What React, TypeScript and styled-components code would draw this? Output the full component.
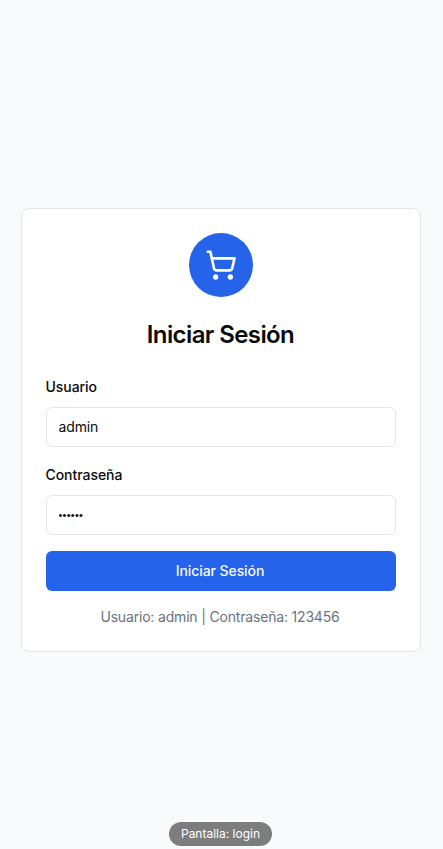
import React, { useState } from "react";
import styled, { createGlobalStyle } from "styled-components";
import { ShoppingCart } from "lucide-react";

const GlobalStyle = createGlobalStyle`
  *, *::before, *::after { box-sizing: border-box; }
  body { margin: 0; background: #f9fafb; font-family: Inter, sans-serif; color: #0a0a0a; }
`;

const Page = styled.main`
  height: 100vh;
  display: grid;
  grid-template-columns: 400px;
  justify-content: center;
  align-content: start;
  padding: 208px 1px 0 0;
  overflow: hidden;
`;

const Card = styled.form`
  height: 444px;
  border: 1px solid #e5e5e5;
  border-radius: 8px;
  background: #fff;
  padding: 24px;
  display: flex;
  flex-direction: column;
`;

const Logo = styled.div`
  width: 64px;
  height: 64px;
  flex: none;
  align-self: center;
  display: grid;
  place-items: center;
  border-radius: 50%;
  background: #2563eb;
  color: #fff;
`;

const Title = styled.h1`
  margin: 22px 0 26px;
  padding-right: 1px;
  text-align: center;
  font-size: 24px;
  line-height: 32px;
  font-weight: 600;
  letter-spacing: -0.6px;
`;

const Field = styled.label`
  display: flex;
  flex-direction: column;
  gap: 10px;
  margin-bottom: 18px;
  font-size: 14px;
  line-height: 20px;
  font-weight: 500;
  letter-spacing: -0.05px;
  text-indent: -0.5px;
`;

const Input = styled.input<{ $masked?: boolean }>`
  height: 40px;
  width: 100%;
  padding: ${(p) => (p.$masked ? "8px 12px" : "6px 12px 8px")};
  border: 1px solid #e5e5e5;
  border-radius: 6px;
  background: #fff;
  color: #0a0a0a;
  font-family: ${(p) => (p.$masked ? '"Liberation Sans"' : "Inter")}, sans-serif;
  font-size: ${(p) => (p.$masked ? 11 : 14)}px;
  font-weight: 400;
  line-height: 20px;
  letter-spacing: ${(p) => (p.$masked ? 0.25 : -0.15)}px;
  text-indent: -0.5px;
  outline: none;
`;

const Submit = styled.button`
  height: 40px;
  flex: none;
  margin-top: -2px;
  padding: 0 2px 0 0;
  border: 0;
  border-radius: 6px;
  background: #2563eb;
  color: #fafafa;
  font: 500 14px/20px Inter, sans-serif;
  letter-spacing: -0.08px;
`;

const Hint = styled.p`
  margin: 16px 0 0;
  padding-right: 2px;
  text-align: center;
  color: #6b7280;
  font-size: 14px;
  line-height: 20px;
  letter-spacing: -0.18px;
`;

const ScreenBadge = styled.div`
  position: fixed;
  bottom: 3px;
  left: 169px;
  width: 103px;
  height: 24px;
  display: grid;
  place-items: center;
  border-radius: 12px;
  background: #7d7d7e;
  color: #fff;
  font-size: 12px;
  line-height: 16px;
`;

export default function App() {
  const [user, setUser] = useState("admin");
  const [password, setPassword] = useState("123456");
  return (
    <Page>
      <GlobalStyle />
      <Card onSubmit={(e) => e.preventDefault()}>
        <Logo><ShoppingCart size={32} /></Logo>
        <Title>Iniciar Sesión</Title>
        <Field>
          Usuario
          <Input value={user} onChange={(e) => setUser(e.target.value)} />
        </Field>
        <Field>
          Contraseña
          <Input $masked type="password" value={password} onChange={(e) => setPassword(e.target.value)} />
        </Field>
        <Submit type="submit">Iniciar Sesión</Submit>
        <Hint>Usuario: admin | Contraseña: 123456</Hint>
      </Card>
      <ScreenBadge>Pantalla: login</ScreenBadge>
    </Page>
  );
}
